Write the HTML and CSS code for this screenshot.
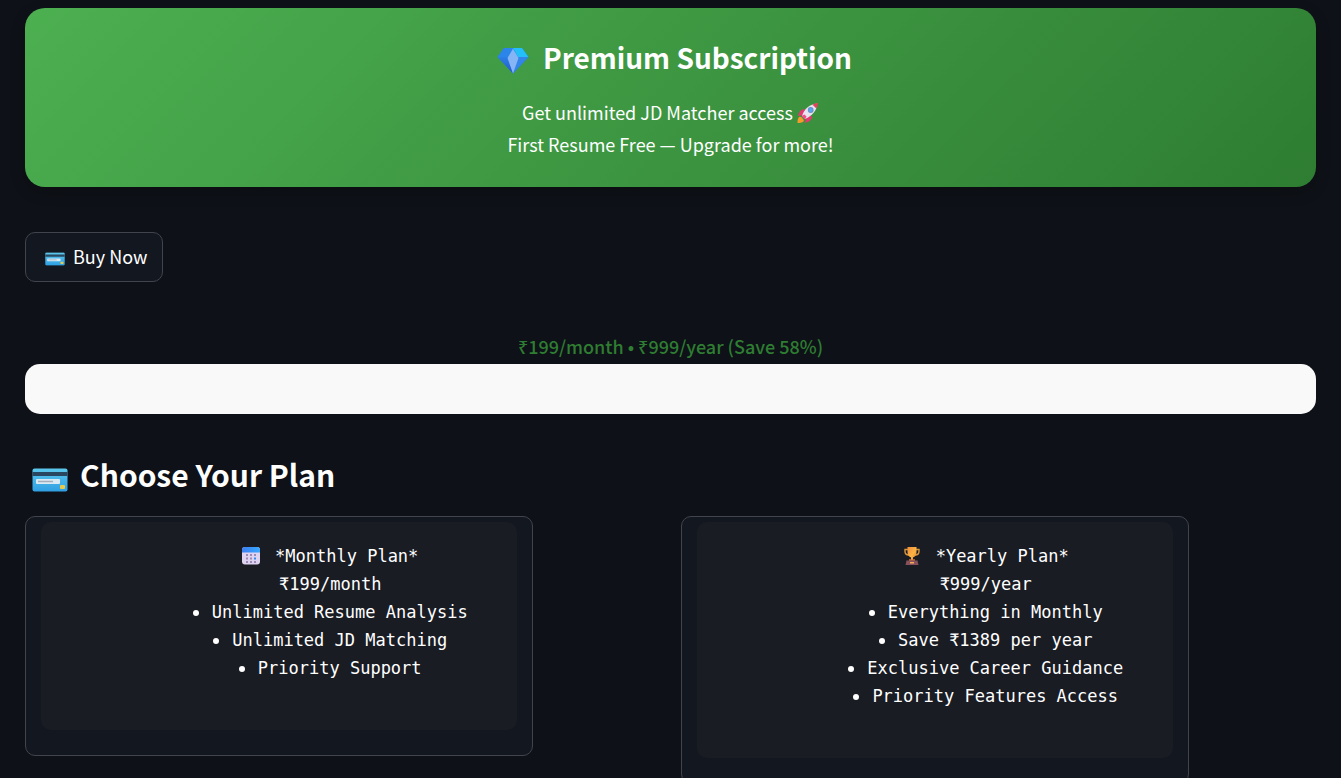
FILE: index.html
```html
<!DOCTYPE html>
<html lang="en">
<head>
<meta charset="utf-8">
<meta name="viewport" content="width=device-width, initial-scale=1">
<title>Premium Subscription</title>
<link rel="stylesheet" href="styles.css">
</head>
<body>
<svg class="defs" aria-hidden="true">
  <defs>
    <linearGradient id="cardBlue" x1="0" y1="0" x2="0" y2="1"><stop offset="0" stop-color="#5cc8ec"/><stop offset="1" stop-color="#2f9fe3"/></linearGradient>
    <linearGradient id="calTop" x1="0" y1="0" x2="1" y2="0"><stop offset="0" stop-color="#3d7ff0"/><stop offset="1" stop-color="#38a8ff"/></linearGradient>
    <linearGradient id="gold" x1="0" y1="0" x2="1" y2="1"><stop offset="0" stop-color="#f08a3c"/><stop offset=".55" stop-color="#fbb544"/><stop offset="1" stop-color="#e5812f"/></linearGradient>
    <linearGradient id="gemLeft" x1="0" y1="0" x2="0" y2="1"><stop offset="0" stop-color="#2b7fe6"/><stop offset="1" stop-color="#2359c9"/></linearGradient>
    <symbol id="credit" viewBox="0 0 36 24">
      <rect x=".5" y=".5" width="35" height="23" rx="2" fill="url(#cardBlue)"/>
      <path d="M.5 4h35v4H.5z" fill="#29485f"/>
      <rect x="4" y="11" width="24" height="5" rx="1" fill="#d9eaf5"/>
      <path d="M6 13.500h15" stroke="#a4aebb" stroke-width="1.500"/>
      <rect x="28" y="17" width="5" height="4" rx="1" fill="#e8c94a"/>
    </symbol>
  </defs>
</svg>
<main class="page">
  <section class="banner">
    <h1 class="banner-title">
      <svg class="gem" viewBox="0 0 32 27" aria-hidden="true">
        <path d="M7 1h18l6.500 9L16 26.500.5 10z" fill="#2b77e4"/>
        <path d="M7 1 .5 10H11l5-9z" fill="#2c86ea"/>
        <path d="M16 1h9l6.500 9H21z" fill="#22bff8"/>
        <path d="M16 1l-5 9h10z" fill="#3f9cf2"/>
        <path d="M.5 10H11l5 16.500z" fill="url(#gemLeft)"/>
        <path d="M31.500 10H21l-5 16.500z" fill="#3385ea"/>
        <path d="M16 2l-5.500 9L16 26.500 21.500 11z" fill="#85b5f5"/>
      </svg>
      <span>Premium Subscription</span>
    </h1>
    <p class="banner-text">Get unlimited JD Matcher access
      <svg class="rocket" viewBox="0 0 22 22" aria-hidden="true">
        <path d="M2 15c2-1 4 1 5 4-2 2-5 2-6.500 2C.5 19 .5 17 2 15z" fill="#f79a2c"/>
        <path d="M8 7c-4 0-6 3-7 7l6-1zM15 14c0 4-3 6-7 7l1-6z" fill="#e23a6e"/>
        <path d="M5 14C7 7 13 2 20 1.500 20.500 8 15 14 8 17z" fill="#e9e4f1"/>
        <path d="M15.500 2.700Q18 1.500 21 .8q-.3 3-1.600 5.700z" fill="#e8405f"/>
        <path d="M4.500 14 8 17.500l1.500-3-2-2z" fill="#f04f86"/>
        <circle cx="13.700" cy="8" r="2.900" fill="#6c8fc4"/>
        <circle cx="13.700" cy="8" r="1.900" fill="#55a8ee"/>
      </svg>
    </p>
    <p class="banner-text">First Resume Free — Upgrade for more!</p>
  </section>

  <button class="buy" type="button">
    <svg class="buy-icon" viewBox="0 0 36 24" aria-hidden="true"><use href="#credit"/></svg>
    <span>Buy Now</span>
  </button>

  <p class="price">₹199/month • ₹999/year (Save 58%)</p>
  <div class="strip"></div>

  <h2 class="plans-title">
    <svg class="title-icon" viewBox="0 0 36 24" aria-hidden="true"><use href="#credit"/></svg>
    <span>Choose Your Plan</span>
  </h2>

  <div class="plans">
    <button class="plan" type="button">
      <span class="plan-body">
        <span class="line name">
          <svg class="plan-icon" viewBox="0 0 18 18" aria-hidden="true">
            <rect width="18" height="17.500" rx="3" fill="#ded3f0"/>
            <path d="M0 5.500V3a3 3 0 0 1 3-3h12a3 3 0 0 1 3 3v2.500z" fill="url(#calTop)"/>
            <path d="M4 7h2v2H4zM8 7h2v2H8zM12 7h2v2h-2zM4 10.500h2v2H4zM8 10.500h2v2H8zM4 14h2v2H4zM8 14h2v2H8zM12 14h2v2h-2z" fill="#9b8bb4"/>
            <path d="M12 10.500h2v2h-2z" fill="#2d8cf5"/>
          </svg>
          <span>*Monthly Plan*</span>
        </span>
        <span class="line">₹199/month</span>
        <span class="line item">Unlimited Resume Analysis</span>
        <span class="line item">Unlimited JD Matching</span>
        <span class="line item">Priority Support</span>
      </span>
    </button>
    <button class="plan" type="button">
      <span class="plan-body">
        <span class="line name">
          <svg class="plan-icon" viewBox="0 0 18 18" aria-hidden="true">
            <path d="M5 2.500H2v2C2 6.500 3.500 8 6 8M13 2.500h3v2C16 6.500 14.500 8 12 8" fill="none" stroke="#d9963c" stroke-width="1.400"/>
            <path d="M4.500 0h9v5c0 3-1.500 5-3.500 5.500V13H8v-2.500C6 10 4.500 8 4.500 5z" fill="url(#gold)"/>
            <path d="M6 12.300h6v1.500H6z" fill="#dc7d3d"/>
            <path d="M3.500 13.500h11l1 4.500h-13z" fill="#87515b"/>
            <path d="M7 15h4v1.500H7z" fill="#f2aa5c"/>
          </svg>
          <span>*Yearly Plan*</span>
        </span>
        <span class="line">₹999/year</span>
        <span class="line item">Everything in Monthly</span>
        <span class="line item">Save ₹1389 per year</span>
        <span class="line item">Exclusive Career Guidance</span>
        <span class="line item">Priority Features Access</span>
      </span>
    </button>
  </div>
</main>
</body>
</html>
```

FILE: styles.css
```css
* { box-sizing: border-box; }

body {
  margin: 0;
  background: #0e1117;
  color: #fff;
  font-family: "Noto Sans CJK JP", "Noto Sans", sans-serif;
  font-size: 18px;
  line-height: 32px;
}

h1, h2, p { margin: 0; }

button {
  font: inherit;
  color: inherit;
  background: #131720;
  border: 1px solid #41444c;
  border-radius: 10px;
  cursor: pointer;
}

svg { flex: none; }

.defs {
  position: absolute;
  width: 0;
  height: 0;
}

.page { padding: 8px 25px 0; }

.banner {
  padding: 24px 25px 27px;
  border-radius: 20px;
  background: linear-gradient(135deg, #4caf50, #2e7d32);
  box-shadow: 0 5px 15px rgba(0, 0, 0, 0.2);
  text-align: center;
}

.banner-title {
  display: flex;
  justify-content: center;
  align-items: center;
  gap: 14px;
  margin-bottom: 14px;
  padding-left: 8px;
  font-size: 28px;
  font-weight: 700;
  line-height: 50px;
}

.gem { width: 32px; height: 27px; margin-top: 6px; }

.rocket {
  width: 22px;
  height: 22px;
  vertical-align: -4px;
}

.buy {
  display: flex;
  align-items: center;
  gap: 8px;
  height: 50px;
  margin-top: 45px;
  padding: 0 15px 2px 19px;
}

.buy-icon { width: 20px; height: 14px; margin-top: 6px; }

.price {
  margin-top: 48px;
  padding-bottom: 2px;
  color: #2e7d32;
  text-align: center;
  font-weight: 500;
}

.strip {
  height: 50px;
  border-radius: 15px;
  background: #f9f9f9;
}

.plans-title {
  display: flex;
  align-items: center;
  gap: 12px;
  margin: 35px 0 17px;
  padding-left: 7px;
  font-size: 30px;
  font-weight: 700;
  line-height: 50px;
}

.title-icon { width: 36px; height: 24px; margin-top: 12px; }

.plans {
  display: grid;
  grid-template-columns: 1fr 1fr;
  gap: 20px;
  align-items: start;
}

.plan {
  width: 80%;
  padding: 5px 15px 25px;
}

.plan-body {
  display: block;
  padding: 20px 20px 48px 122px;
  border-radius: 10px;
  background: #1a1c24;
  font-family: "DejaVu Sans Mono", "Liberation Mono", monospace;
  font-size: 17px;
  line-height: 28px;
  text-align: center;
}

.line {
  display: flex;
  justify-content: center;
  align-items: center;
  height: 28px;
  white-space: nowrap;
}

.name { gap: 15px; }

.plan-icon { width: 18px; height: 18px; }

.item { gap: 13px; }

.item::before {
  content: "";
  width: 6px;
  height: 6px;
  margin-top: 2px;
  border-radius: 50%;
  background: #fff;
}
```
